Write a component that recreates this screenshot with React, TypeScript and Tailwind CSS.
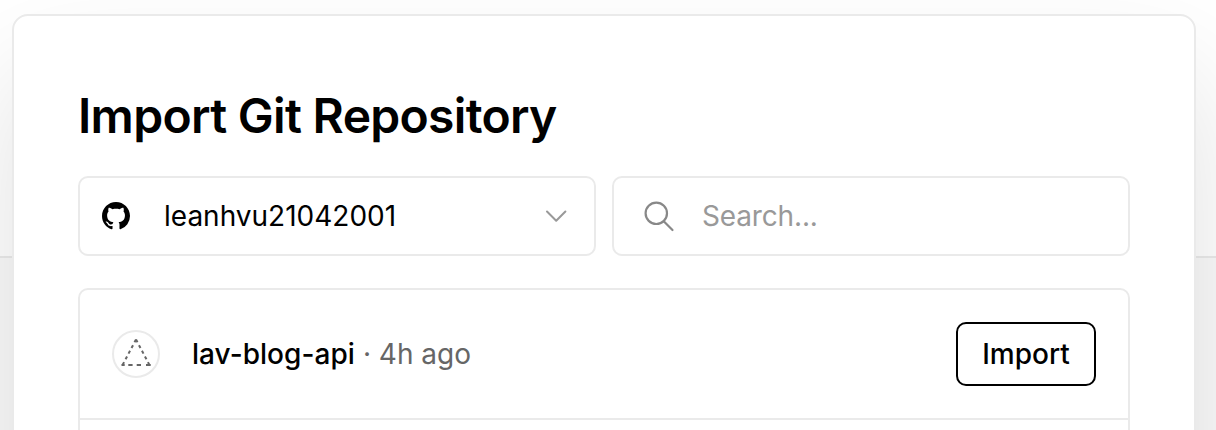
export default function App() {
  return (
    <div className="h-[430px] w-full overflow-hidden bg-[linear-gradient(to_bottom,#ffffff_256px,#eaeaea_256px,#eaeaea_258px,#fafafa_258px)] pt-[14px] pr-5 pl-3 font-['Inter',sans-serif] text-[28px] text-black">
      <main className="h-[900px] rounded-[16px] border-2 border-[#eaeaea] bg-white px-16 pt-[70px] shadow-[0_60px_120px_rgba(0,0,0,0.12)]">
        <h1 className="text-[48px] leading-[60px] font-semibold tracking-[-0.69px] whitespace-nowrap">
          Import Git Repository
        </h1>
        <div className="mt-[30px] grid grid-cols-2 gap-4">
          <button
            type="button"
            className="flex h-20 items-center rounded-[10px] border-2 border-[#eaeaea] bg-white pr-[26px] pl-[22px]"
          >
            <svg className="h-7 w-7 shrink-0" viewBox="0 0 16 16" fill="#000">
              <path d="M8 0C3.58 0 0 3.58 0 8c0 3.54 2.29 6.53 5.47 7.59.4.07.55-.17.55-.38 0-.19-.01-.82-.01-1.49-2.01.37-2.53-.49-2.69-.94-.09-.23-.48-.94-.82-1.13-.28-.15-.68-.52-.01-.53.63-.01 1.08.58 1.23.82.72 1.21 1.87.87 2.33.66.07-.52.28-.87.51-1.07-1.78-.2-3.64-.89-3.64-3.95 0-.87.31-1.59.82-2.15-.08-.2-.36-1.02.08-2.12 0 0 .67-.21 2.2.82.64-.18 1.32-.27 2-.27s1.36.09 2 .27c1.53-1.04 2.2-.82 2.2-.82.44 1.1.16 1.92.08 2.12.51.56.82 1.27.82 2.15 0 3.07-1.87 3.75-3.65 3.95.29.25.54.73.54 1.48 0 1.07-.01 1.93-.01 2.2 0 .21.15.46.55.38A8.01 8.01 0 0 0 16 8c0-4.42-3.58-8-8-8z" />
            </svg>
            <span className="ml-[34px]">leanhvu21042001</span>
            <svg
              className="ml-auto h-6 w-6 shrink-0"
              viewBox="0 0 24 24"
              fill="none"
              stroke="#999"
              strokeWidth="2"
              strokeLinecap="round"
              strokeLinejoin="round"
            >
              <path d="M3 7.500l9.200 9.200L21.400 7.500" />
            </svg>
          </button>
          <label className="flex h-20 items-center rounded-[10px] border-2 border-[#eaeaea] bg-white pl-[29px]">
            <svg
              className="h-8 w-8 shrink-0"
              viewBox="0 0 32 32"
              fill="none"
              stroke="#888"
              strokeWidth="2.2"
              strokeLinecap="round"
            >
              <circle cx="13.300" cy="13.300" r="10.700" />
              <path d="M21 21.500l8.500 8.500" />
            </svg>
            <span className="ml-[27px] tracking-[-0.15px] text-[#999]">
              Search...
            </span>
          </label>
        </div>
        <ul className="mt-8 h-[600px] rounded-[10px] border-2 border-[#eaeaea]">
          <li className="flex h-[130px] items-center border-b-2 border-[#eaeaea] px-8">
            <span className="flex h-12 w-12 items-center justify-center rounded-full border-2 border-[#eaeaea]">
              <svg
                className="h-11 w-11 shrink-0"
                viewBox="0 0 44 44"
                fill="none"
                stroke="#666"
                strokeWidth="2"
              >
                <path strokeDasharray="3.2 3.2" d="M22 7.500L8.300 33.500" />
                <path strokeDasharray="3.2 3.2" d="M22 7.500L35.700 33.500" />
                <path d="M7.500 33h3.200M14.300 33h4.300M22.700 33h4.300M32 33h4.700" />
              </svg>
            </span>
            <span className="ml-8 font-medium tracking-[0.05px]">lav-blog-api</span>
            <span className="ml-2 text-[#666]">· 4h ago</span>
            <button
              type="button"
              className="ml-auto h-16 w-[140px] rounded-[10px] border-2 border-black bg-white font-medium"
            >
              Import
            </button>
          </li>
        </ul>
      </main>
    </div>
  );
}
